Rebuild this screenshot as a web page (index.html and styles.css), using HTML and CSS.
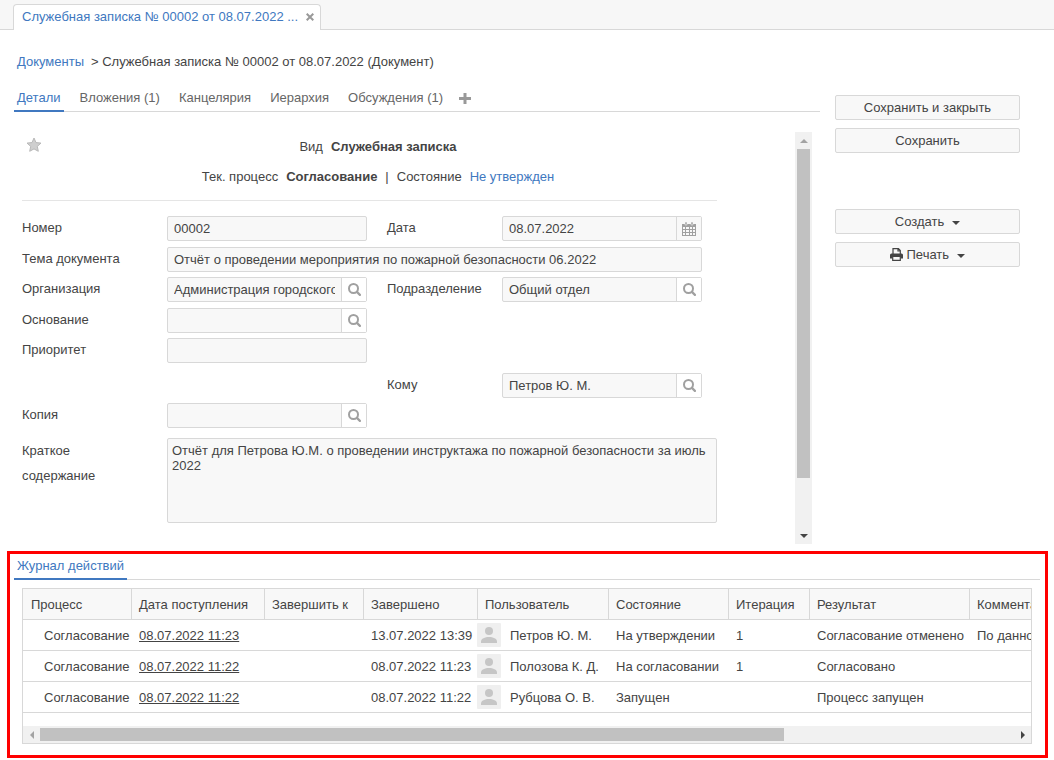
FILE: index.html
```html
<!DOCTYPE html>
<html lang="ru">
<head>
<meta charset="utf-8">
<title>Служебная записка № 00002</title>
<link rel="stylesheet" href="styles.css">
</head>
<body>
<svg class="sprite" aria-hidden="true">
  <symbol id="i-search" viewBox="0 0 13 13"><circle cx="5.500" cy="5.500" r="4.500" fill="none" stroke="currentColor" stroke-width="2"/><path d="M8.900 8.900l3 3" stroke="currentColor" stroke-width="2.200" stroke-linecap="round"/></symbol>
  <symbol id="i-calendar" viewBox="0 0 14 14"><path d="M0 2h14v12H0z" fill="currentColor"/><path d="M3 0h2v3H3zM9 0h2v3H9z" fill="currentColor" stroke="#f8f8f8" stroke-width=".5"/><path d="M1 5h2v2H1zM4 5h3v2H4zM8 5h2v2H8zM11 5h2v2h-2zM1 8h2v2H1zM4 8h3v2H4zM8 8h2v2H8zM11 8h2v2h-2zM1 11h2v2H1zM4 11h3v2H4zM8 11h2v2H8zM11 11h2v2h-2z" fill="#f8f8f8"/></symbol>
  <symbol id="i-user" viewBox="0 0 24 24"><rect width="24" height="24" rx="1" fill="#efefef"/><circle cx="12" cy="8" r="4" fill="#c6c6c6"/><path d="M4 20v-1.500c0-3 4-4.500 8-4.500s8 1.500 8 4.500V20z" fill="#c6c6c6"/></symbol>
</svg>

<header class="window-tabs">
  <div class="window-tab">
    <a href="#">Служебная записка № 00002 от 08.07.2022 ...</a>
    <button type="button" class="close" aria-label="Закрыть"><svg width="8" height="8" viewBox="0 0 8 8"><path d="M.7.700l6.600 6.600M7.300.700L.700 7.300" stroke="currentColor" stroke-width="2"/></svg></button>
  </div>
</header>

<nav class="breadcrumb"><a href="#">Документы</a><span>&gt; Служебная записка № 00002 от 08.07.2022 (Документ)</span></nav>

<main class="workspace">
  <section class="document">
    <nav class="tabs">
      <a class="tab active" href="#">Детали</a>
      <a class="tab" href="#">Вложения (1)</a>
      <a class="tab" href="#">Канцелярия</a>
      <a class="tab" href="#">Иерархия</a>
      <a class="tab" href="#">Обсуждения (1)</a>
      <button type="button" class="add" aria-label="Добавить"><svg width="12" height="12" viewBox="0 0 12 12"><path d="M6 0v11M0 5.500h12" stroke="currentColor" stroke-width="3"/></svg></button>
    </nav>

    <div class="scroll-area">
      <form class="form">
        <div class="summary">
          <svg class="star" width="16" height="16" viewBox="0 0 16 16"><path d="M8 1l2 4.600 5 .5-3.700 3.300 1 4.900L8 11.900l-4.300 2.400 1-4.900L1 6.100l5-.5z" fill="#cfcfcf" stroke="#b9b9b9"/></svg>
          <p><span>Вид</span><b>Служебная записка</b></p>
          <p class="state"><span>Тек. процесс</span><b>Согласование</b><span>|</span><span>Состояние</span><a href="#">Не утвержден</a></p>
        </div>
        <div class="fields">
          <label for="number">Номер</label>
          <div class="field"><input id="number" type="text" value="00002"></div>
          <label class="second" for="date">Дата</label>
          <div class="field"><input id="date" type="text" value="08.07.2022"><button type="button" class="calendar" aria-label="Календарь"><svg width="14" height="14"><use href="#i-calendar"/></svg></button></div>

          <label for="subject">Тема документа</label>
          <div class="field wide"><input id="subject" type="text" value="Отчёт о проведении мероприятия по пожарной безопасности 06.2022"></div>

          <label for="org">Организация</label>
          <div class="field"><input id="org" type="text" value="Администрация городского округа"><button type="button" aria-label="Найти"><svg width="13" height="13"><use href="#i-search"/></svg></button></div>
          <label class="second" for="dept">Подразделение</label>
          <div class="field"><input id="dept" type="text" value="Общий отдел"><button type="button" aria-label="Найти"><svg width="13" height="13"><use href="#i-search"/></svg></button></div>

          <label for="basis">Основание</label>
          <div class="field"><input id="basis" type="text"><button type="button" aria-label="Найти"><svg width="13" height="13"><use href="#i-search"/></svg></button></div>

          <label for="priority">Приоритет</label>
          <div class="field"><input id="priority" type="text"></div>

          <label class="second recipient" for="to">Кому</label>
          <div class="field recipient"><input id="to" type="text" value="Петров Ю. М."><button type="button" aria-label="Найти"><svg width="13" height="13"><use href="#i-search"/></svg></button></div>

          <label class="copy" for="copy">Копия</label>
          <div class="field copy"><input id="copy" type="text"><button type="button" aria-label="Найти"><svg width="13" height="13"><use href="#i-search"/></svg></button></div>

          <label class="long" for="brief">Краткое содержание</label>
          <textarea id="brief">Отчёт для Петрова Ю.М. о проведении инструктажа по пожарной безопасности за июль 2022</textarea>
        </div>
      </form>
      <div class="bar vertical">
        <span class="arrow up"></span><span class="thumb"></span><span class="rest"></span><span class="arrow down"></span>
      </div>
    </div>
  </section>

  <aside class="actions">
    <button type="button">Сохранить и закрыть</button>
    <button type="button">Сохранить</button>
    <button type="button" class="group-start">Создать<i class="caret"></i></button>
    <button type="button"><svg width="13" height="13" viewBox="0 0 13 13"><path d="M3 6V.7h5.500L10.300 2.500V6M8 .7v2.300h2.300" fill="none" stroke="currentColor" stroke-width="1.200"/><path d="M1.500 5.500h10A1.500 1.500 0 0 1 13 7v3.500h-2.200V9H2.200v1.500H0V7a1.500 1.500 0 0 1 1.500-1.500z" fill="currentColor"/><path d="M2.700 9v3.300h7.600V9" fill="none" stroke="currentColor" stroke-width="1.200"/></svg>&nbsp;Печать<i class="caret"></i></button>
  </aside>
</main>

<section class="journal">
  <nav class="tabs"><a class="tab active" href="#">Журнал действий</a></nav>
  <div class="grid">
    <table>
      <colgroup><col class="c1"><col class="c2"><col class="c3"><col class="c4"><col class="c5"><col class="c6"><col class="c7"><col class="c8"><col class="c9"></colgroup>
      <thead>
        <tr><th>Процесс</th><th>Дата поступления</th><th>Завершить к</th><th>Завершено</th><th>Пользователь</th><th>Состояние</th><th>Итерация</th><th>Результат</th><th>Комментарий</th></tr>
      </thead>
      <tbody>
        <tr><td>Согласование</td><td><a href="#">08.07.2022 11:23</a></td><td></td><td>13.07.2022 13:39</td><td><div class="user"><svg width="24" height="24"><use href="#i-user"/></svg>Петров Ю. М.</div></td><td>На утверждении</td><td>1</td><td>Согласование отменено</td><td>По данному</td></tr>
        <tr><td>Согласование</td><td><a href="#">08.07.2022 11:22</a></td><td></td><td>08.07.2022 11:23</td><td><div class="user"><svg width="24" height="24"><use href="#i-user"/></svg>Полозова К. Д.</div></td><td>На согласовании</td><td>1</td><td>Согласовано</td><td></td></tr>
        <tr><td>Согласование</td><td><a href="#">08.07.2022 11:22</a></td><td></td><td>08.07.2022 11:22</td><td><div class="user"><svg width="24" height="24"><use href="#i-user"/></svg>Рубцова О. В.</div></td><td>Запущен</td><td></td><td>Процесс запущен</td><td></td></tr>
      </tbody>
    </table>
    <div class="bar horizontal">
      <span class="arrow left"></span><span class="thumb"></span><span class="rest"></span><span class="arrow right"></span>
    </div>
  </div>
</section>
</body>
</html>
```
FILE: styles.css
```css
* { box-sizing: border-box; }

body {
  margin: 0;
  background: #fff;
  color: #444;
  font: 13px/20px "Liberation Sans", Arial, sans-serif;
}

a { color: #4078c0; text-decoration: none; }
p { margin: 0; }
button, input, textarea { font: inherit; color: inherit; }
button { cursor: pointer; }
.sprite { position: absolute; width: 0; height: 0; }

/* Window tabs */
.window-tabs {
  display: flex;
  height: 30px;
  padding: 4px 13px 0;
  background: #f7f7f7;
  border-bottom: 1px solid #d8d8d8;
}
.window-tab {
  display: flex;
  align-items: center;
  gap: 8px;
  height: 26px;
  padding: 0 6px 1px 8px;
  background: #fff;
  border: 1px solid #d8d8d8;
  border-bottom: 0;
  border-radius: 4px 4px 0 0;
}
.close, .add {
  display: flex;
  padding: 0;
  border: 0;
  background: none;
  color: #999;
}

.breadcrumb {
  display: flex;
  gap: 7px;
  padding: 22px 17px 0;
}

/* Document and its actions */
.workspace {
  display: flex;
  gap: 15px;
  padding: 14px 34px 0 14px;
}
.document { flex: 1; min-width: 0; }

.tabs {
  display: flex;
  gap: 13px;
  border-bottom: 1px solid #d8d8d8;
}
.tab {
  height: 26px;
  margin-bottom: -1px;
  padding: 2px 3px 0;
  color: #666;
}
.tab.active { color: #4078c0; border-bottom: 2px solid #4078c0; }
.add { align-items: center; }

.scroll-area {
  display: flex;
  margin: 20px 8px 0 0;
}
.form { flex: 1; min-width: 0; padding: 0 78px 21px 8px; }

.summary {
  display: grid;
  grid-template-columns: 20px 1fr;
  padding: 5px 3px 13px 0;
  border-bottom: 1px solid #e5e5e5;
}
.summary p {
  display: flex;
  justify-content: center;
  gap: 8px;
  height: 30px;
}
.summary .state { grid-column: 2; height: 20px; }
.star { justify-self: end; }

.fields {
  display: grid;
  grid-template-columns: 145px minmax(0, 1fr) 20px 115px minmax(0, 1fr) 15px;
  grid-template-rows: 31px 30px 31px 30px 35px 30px 35px 85px;
  padding-top: 15px;
}
.fields label { grid-column: 1; line-height: 24px; }
.fields .second { grid-column: 4; }
.fields .recipient { grid-row: 6; }
.fields div.recipient { grid-column: 5; }
.fields .copy { grid-row: 7; }
.fields .long { grid-row: 8; line-height: 25px; padding-right: 50px; }
.field {
  display: flex;
  height: 25px;
  border: 1px solid #d8d8d8;
  border-radius: 2px;
  background: #f8f8f8;
}
.field.wide { grid-column: 2 / 6; }
.field input {
  flex: 1;
  min-width: 0;
  padding: 0 6px;
  border: 0;
  background: none;
}
.field button {
  display: flex;
  align-items: center;
  justify-content: center;
  width: 25px;
  padding: 0;
  border: 0;
  border-left: 1px solid #d8d8d8;
  background: #fff;
  color: #a0a0a0;
}
.field .calendar { background: #f8f8f8; }
textarea {
  grid-column: 2 / 7;
  grid-row: 8;
  padding: 4px;
  border: 1px solid #d8d8d8;
  border-radius: 2px;
  background: #f8f8f8;
  line-height: 15px;
  resize: none;
}

.actions {
  display: flex;
  flex-direction: column;
  gap: 8px;
  width: 185px;
  padding-top: 9px;
}
.actions button {
  display: flex;
  align-items: center;
  justify-content: center;
  height: 25px;
  padding: 0;
  border: 1px solid #d8d8d8;
  border-radius: 2px;
  background: #f8f8f8;
}
.actions .group-start { margin-top: 48px; }
.caret {
  margin: 3px 0 0 8px;
  border: 4px solid transparent;
  border-top-color: #444;
  border-bottom: 0;
}

/* Scroll bars */
.bar { display: flex; background: #f1f1f1; }
.bar .thumb { background: #c1c1c1; }
.arrow {
  display: flex;
  align-items: center;
  justify-content: center;
  width: 17px;
  height: 17px;
}
.arrow::before { content: ""; border: 4px solid transparent; }
.up::before { border-bottom-color: #a3a3a3; border-top: 0; }
.down::before { border-top-color: #444; border-bottom: 0; }
.left::before { border-right-color: #a3a3a3; border-left: 0; }
.right::before { border-left-color: #444; border-right: 0; }
.vertical { flex-direction: column; width: 17px; }
.vertical .thumb { flex: 329; margin: 0 2px; }
.vertical .rest { flex: 49; }
.horizontal .thumb { flex: 744; margin: 2px 0; }
.horizontal .rest { flex: 230; }

/* Action journal */
.journal {
  margin: 7px 6px 0 7px;
  padding: 0 5px 11px 4px;
  border: 3px solid #f00;
}
.grid {
  margin: 8px 8px 0;
  border: 1px solid #d8d8d8;
  overflow: hidden;
}
table {
  width: 1246px;
  margin-bottom: 13px;
  table-layout: fixed;
  border-collapse: separate;
  border-spacing: 0;
}
.c1 { width: 108px; }
.c2 { width: 133px; }
.c3 { width: 99px; }
.c4 { width: 114px; }
.c5 { width: 131px; }
.c6 { width: 120px; }
.c7 { width: 81px; }
.c8 { width: 160px; }
.c9 { width: 300px; }
th, td {
  height: 31px;
  padding: 2px 0 0 8px;
  border-bottom: 1px solid #d8d8d8;
  text-align: left;
  font-weight: normal;
  white-space: nowrap;
}
th { background: #f8f8f8; }
th + th { padding-left: 7px; border-left: 1px solid #d8d8d8; }
td:first-child { padding-left: 21px; }
td:nth-child(5) { padding-left: 0; }
td a { color: #444; text-decoration: underline; }
.user { display: flex; align-items: center; gap: 9px; }
.user svg { margin-bottom: 2px; }
```
